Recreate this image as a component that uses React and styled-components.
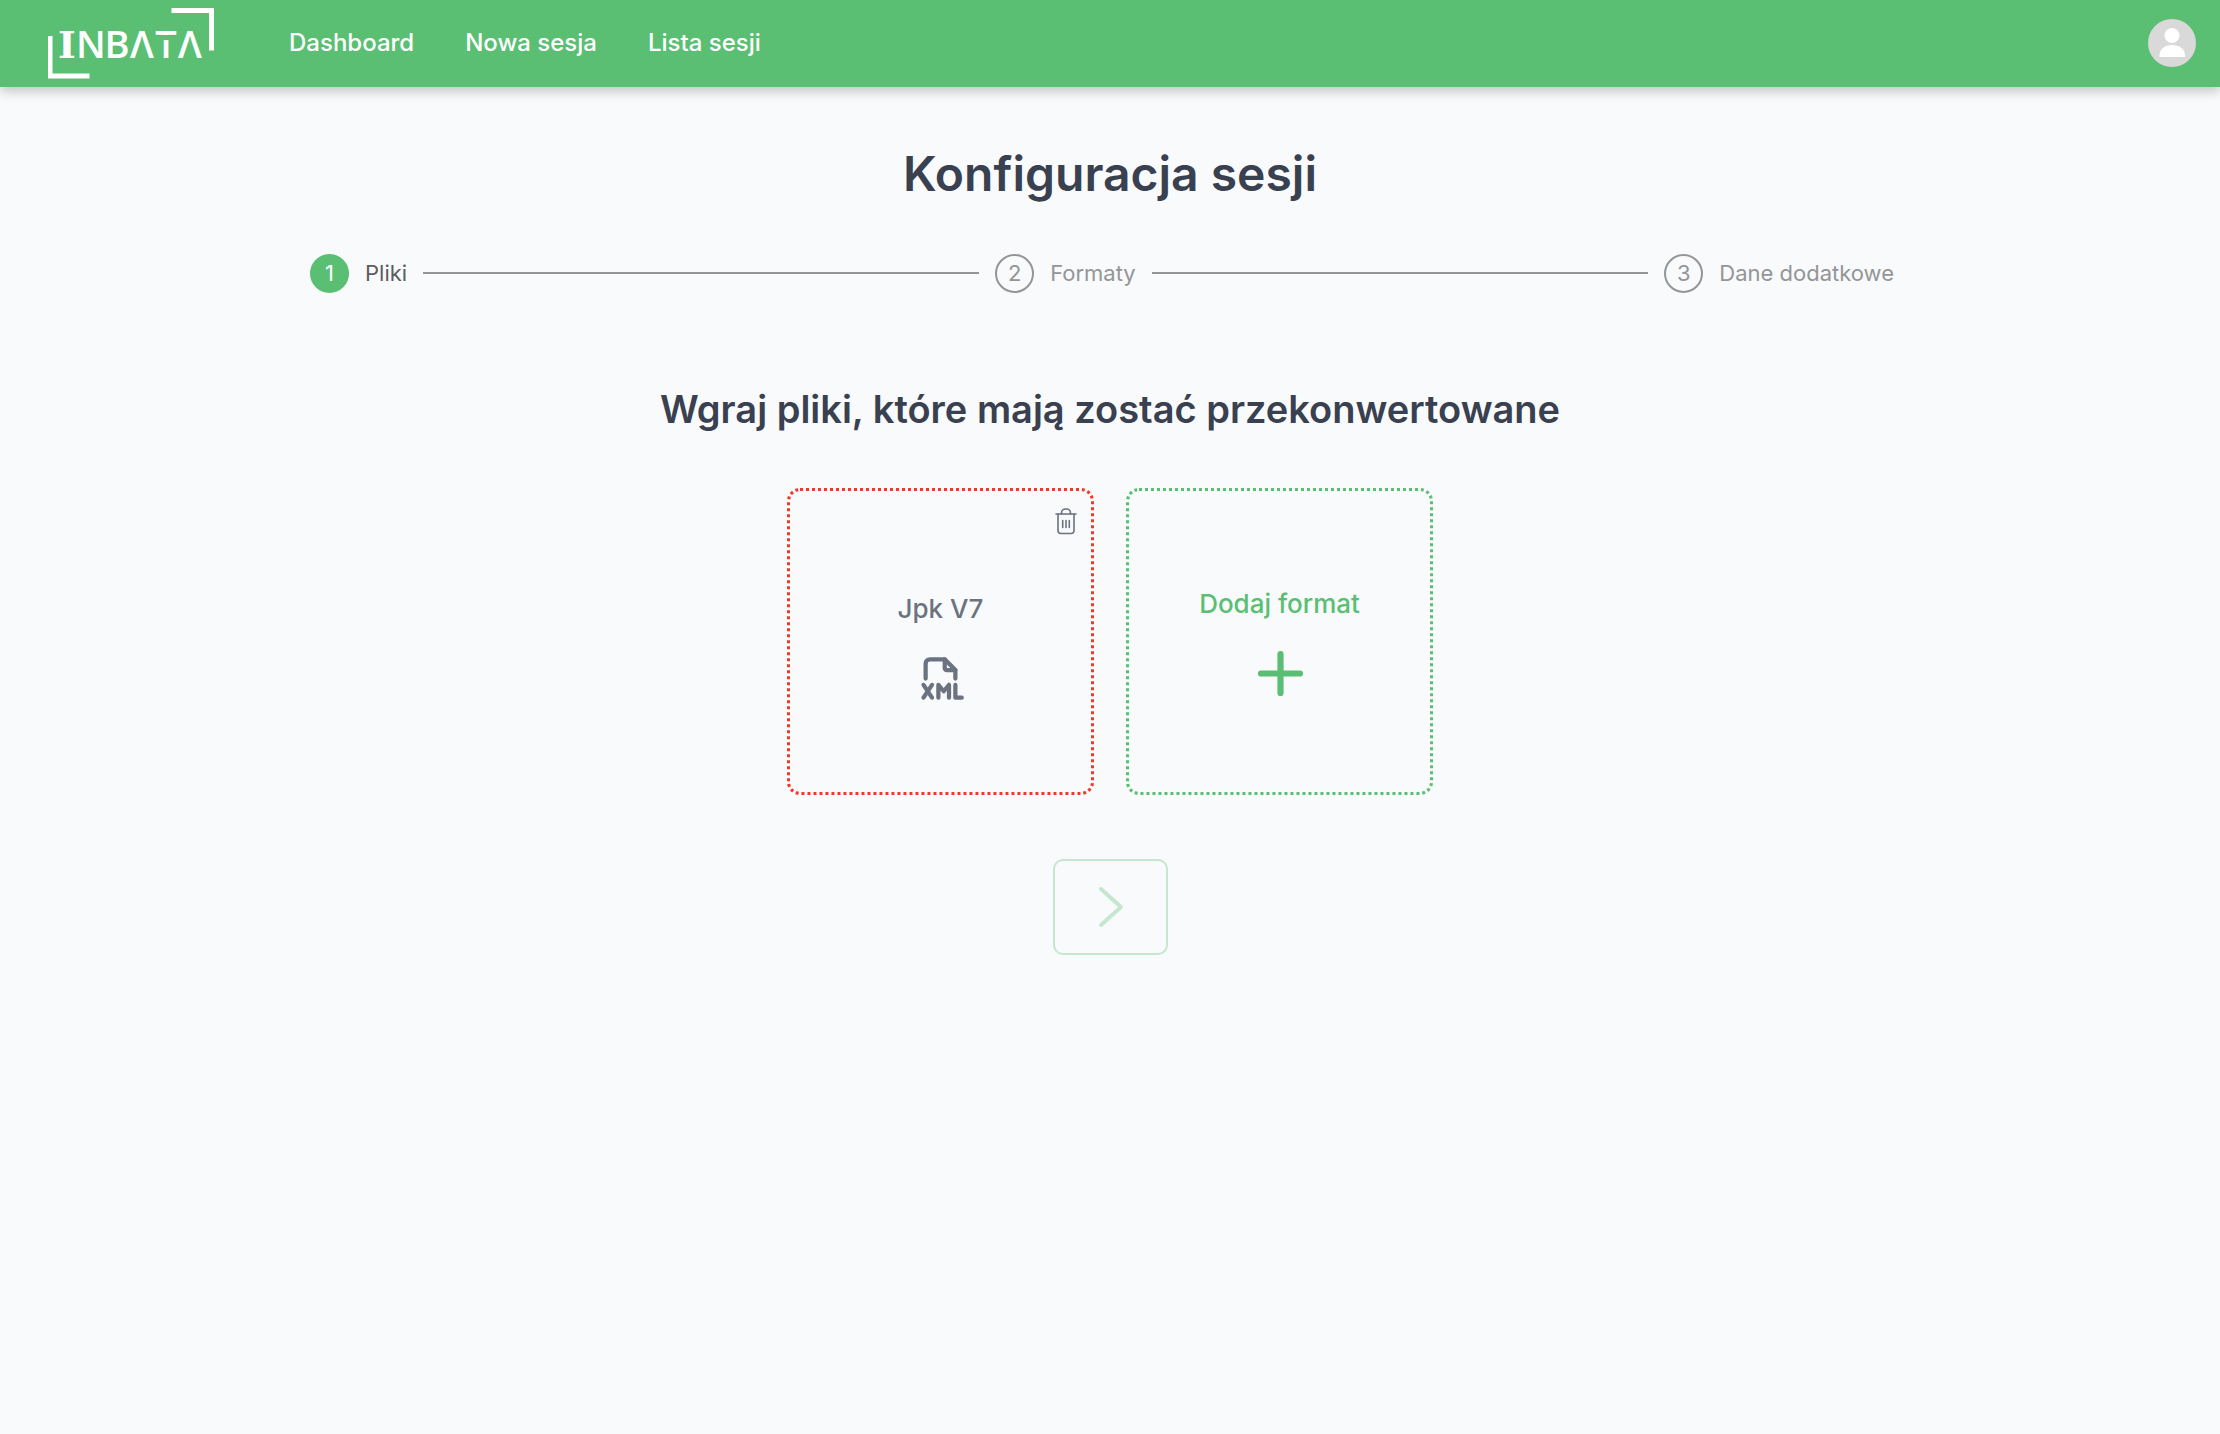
import styled, { createGlobalStyle, css } from "styled-components";
import { useState } from "react";
import { TbFileTypeXml } from "react-icons/tb";

const GlobalStyle = createGlobalStyle`
    * {
        box-sizing: border-box;
    }

    body {
        margin: 0;
        min-height: 100vh;
        background: #f9fafc;
        font-family: Inter, "Liberation Sans", sans-serif;
        color: #394150;
    }

    button {
        font-family: inherit;
        cursor: pointer;
    }
`

const Header = styled.header`
    display: flex;
    align-items: center;
    height: 87px;
    padding: 0 24px 1px 48px;
    background: #5abf73;
    box-shadow: 0 5px 10px rgba(0, 0, 0, 0.2);
`

const LogoLink = styled.a`
    display: block;
    height: 71px;
`

const Nav = styled.nav`
    display: flex;
    flex: 1;
    gap: 51px;
    margin-left: 75px;
`

const NavLink = styled.a`
    color: #fff;
    font-size: 24px;
    font-weight: 500;
    line-height: 32px;
    text-decoration: none;
`

const AvatarButton = styled.button`
    width: 48px;
    height: 48px;
    padding: 0;
    border: 0;
    border-radius: 50%;
    background: #d9d9d9;
`

const Main = styled.main`
    display: flex;
    flex-direction: column;
    align-items: center;
    padding: 55px 24px;
`

const PageTitle = styled.h1`
    margin: 0;
    font-size: 48px;
    font-weight: 600;
    line-height: 64px;
`

const StepNumber = styled.span`
    display: flex;
    align-items: center;
    justify-content: center;
    width: 39px;
    height: 39px;
    border: 2px solid #949596;
    border-radius: 50%;

    ${({ $active }) => $active && css`
        border-color: #5abf73;
        background: #5abf73;
        color: #fff;
    `}
`

const Steps = styled.ol`
    display: flex;
    width: 100%;
    max-width: 1600px;
    margin: 47px 0 0;
    padding: 0;
    list-style: none;
`

const Step = styled.li`
    display: flex;
    flex: 1;
    align-items: center;
    gap: 16px;
    color: ${({ $active }) => $active ? '#5c5d5e' : '#949596'};
    font-size: 22px;
    line-height: 40px;
    white-space: nowrap;

    &:not(:first-child) ${StepNumber} {
        margin-left: 16px;
    }

    &:last-child {
        flex: none;
        padding-right: 16px;
    }

    &:not(:last-child)::after {
        content: "";
        flex: 1;
        height: 2px;
        background: #949596;
    }
`

const SectionTitle = styled.h2`
    margin: 92px 0 0;
    font-size: 38px;
    font-weight: 600;
    line-height: 48px;
    text-align: center;
`

const Cards = styled.div`
    display: flex;
    flex-wrap: wrap;
    justify-content: center;
    gap: 32px;
    margin-top: 55px;
`

const cardStyles = css`
    position: relative;
    display: flex;
    flex-direction: column;
    align-items: center;
    justify-content: center;
    gap: 24px;
    width: 307px;
    height: 307px;
    border-radius: 13px;
    font-size: 26px;
    font-weight: 500;
    line-height: 40px;
`

const FileCard = styled.article`
    ${cardStyles}
    padding-top: 10px;
    border: 3px dotted #ee3a2c;
    color: #6b7280;
`

const AddCard = styled.button`
    ${cardStyles}
    padding: 0;
    border: 3px dotted #5abf73;
    background: none;
    color: #5abf73;
`

const DeleteButton = styled.button`
    position: absolute;
    top: 15px;
    right: 9px;
    display: flex;
    padding: 0;
    border: 0;
    background: none;
    color: inherit;
`

const NextButton = styled.button`
    display: flex;
    align-items: center;
    justify-content: center;
    width: 115px;
    height: 96px;
    margin-top: 64px;
    border: 2px solid #5abf73;
    border-radius: 10px;
    background: none;
    color: #5abf73;

    &:disabled {
        opacity: 0.32;
        cursor: default;
    }
`

const LogoText = styled.text`
    fill: #fff;
    font-family: "Open Sans", sans-serif;
    font-size: 38px;
    font-weight: 600;
    text-anchor: middle;
`

const LogoInitial = styled.tspan`
    font-family: "DejaVu Serif", serif;
    font-weight: 700;
`

const Logo = ()=>(
    <svg width="166" height="71" viewBox="0 0 166 71" role="img" aria-label="INBATA">
        <g fill="none" stroke="#fff" strokeWidth="5">
            <path d="M2 28v40h39.500" />
            <path d="M123.500 2.500h40v40" />
        </g>
        <LogoText x="19 43 69 94 118 142" y="50"><LogoInitial>I</LogoInitial>NBΛTΛ</LogoText>
        {/* gap between the bar and the stem of the T */}
        <rect x="108" y="27" width="20" height="5" fill="#5abf73" />
    </svg>
)

const UserIcon = ()=>(
    <svg width="48" height="48" viewBox="0 0 48 48" fill="#fff" aria-hidden="true">
        <circle cx="24" cy="16.500" r="7.500" />
        <path d="M11.500 38v-1.500C11.500 30 17 26 24 26s13 4 13 10.500V38z" />
    </svg>
)

const TrashIcon = ()=>(
    <svg width="32" height="32" viewBox="0 0 32 32" fill="none" stroke="currentColor" strokeWidth="1.600" strokeLinecap="round" aria-hidden="true">
        <path d="M6 8h20" />
        <path d="M11.500 8V7a4 4 0 0 1 4-4h1a4 4 0 0 1 4 4v1" />
        <path d="M8 8v16.500a3 3 0 0 0 3 3h10a3 3 0 0 0 3-3V8" />
        <path d="M12.700 14.500v7M16 14.500v7M19.300 14.500v7" />
    </svg>
)

const PlusIcon = ()=>(
    <svg width="52" height="52" viewBox="0 0 52 52" fill="none" stroke="currentColor" strokeWidth="6.200" strokeLinecap="round" aria-hidden="true">
        <path d="M26.500 6v39M7 25.500h39" />
    </svg>
)

const ChevronIcon = ()=>(
    <svg width="48" height="48" viewBox="0 0 48 48" fill="none" stroke="currentColor" strokeWidth="4" strokeLinecap="round" strokeLinejoin="round" aria-hidden="true">
        <path d="M15 6l20 18-20 18" />
    </svg>
)

const links = ['Dashboard', 'Nowa sesja', 'Lista sesji'];
const steps = ['Pliki', 'Formaty', 'Dane dodatkowe'];

export default function App(){
    const [files, setFiles] = useState(()=>[{id: 1, name: 'Jpk V7'}]);

    const addFile = ()=>{
        setFiles((prevState)=>([...prevState, {id: Date.now(), name: 'Jpk V7'}]));
    }

    const removeFile = (id)=>{
        setFiles((prevState)=>prevState.filter((file)=>file.id !== id));
    }

    return(
        <>
            <GlobalStyle/>
            <Header>
                <LogoLink href="#"><Logo/></LogoLink>
                <Nav>
                    {links.map((link)=><NavLink key={link} href="#">{link}</NavLink>)}
                </Nav>
                <AvatarButton aria-label="Konto"><UserIcon/></AvatarButton>
            </Header>

            <Main>
                <PageTitle>Konfiguracja sesji</PageTitle>

                <Steps>
                    {steps.map((step, index)=>(
                        <Step key={step} $active={index === 0}>
                            <StepNumber $active={index === 0}>{index + 1}</StepNumber>
                            {step}
                        </Step>
                    ))}
                </Steps>

                <SectionTitle>Wgraj pliki, które mają zostać przekonwertowane</SectionTitle>

                <Cards>
                    {files.map(({id, name})=>(
                        <FileCard key={id}>
                            <DeleteButton aria-label="Usuń" onClick={()=>removeFile(id)}><TrashIcon/></DeleteButton>
                            {name}
                            <TbFileTypeXml size={51}/>
                        </FileCard>
                    ))}
                    <AddCard onClick={addFile}>
                        Dodaj format
                        <PlusIcon/>
                    </AddCard>
                </Cards>

                <NextButton disabled aria-label="Dalej"><ChevronIcon/></NextButton>
            </Main>
        </>
    )
}
